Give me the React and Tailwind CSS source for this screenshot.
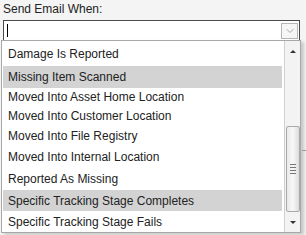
import { ChevronDown } from "lucide-react";

const options = [
  { label: "Damage Is Reported", h: "h-[24px]" },
  { label: "Missing Item Scanned", h: "h-[22px]", active: true },
  { label: "Moved Into Asset Home Location", h: "h-[19px]" },
  { label: "Moved Into Customer Location", h: "h-[19px]" },
  { label: "Moved Into File Registry", h: "h-[21px]" },
  { label: "Moved Into Internal Location", h: "h-[22px]" },
  { label: "Reported As Missing", h: "h-[22px]" },
  { label: "Specific Tracking Stage Completes", h: "h-[21px]", active: true },
  { label: "Specific Tracking Stage Fails", h: "h-[21px]" },
];

const App = () => {
  return (
    <div
      className="relative w-[306px] h-[235px] overflow-hidden bg-[#f4f4f4] text-[#222]"
      style={{ fontFamily: '"Liberation Sans", Arial, sans-serif' }}
    >
      <div className="pl-[3px] pt-[1px] h-[20px] text-[12px] leading-[16px]">Send Email When:</div>

      {/* input */}
      <div className="ml-[3px] w-[297px] h-[21px] border border-[#4a4a4a] bg-white flex items-center">
        <div className="ml-[3px] w-px h-[13px] bg-black" />
        <div className="ml-auto mr-[1px] w-[17px] h-[16px] border border-[#b5b5b5] bg-[#f6f6f6] flex items-center justify-center">
          <ChevronDown className="w-[12px] h-[12px] text-[#8a8a8a]" strokeWidth={1.5} />
        </div>
      </div>

      {/* dropdown list */}
      <div className="absolute left-[1px] top-[40px] w-[300px] h-[193px] border border-[#a8a8a8] bg-white flex shadow-[3px_2px_3px_rgba(0,0,0,0.18)]">
        <div className="flex-1 flex flex-col pl-[1px] pt-[1px]">
          {options.map((o) => (
            <div
              key={o.label}
              className={`${o.h} flex items-center pl-[5px] text-[12px] whitespace-nowrap ${o.active ? "bg-[#d3d3d3]" : ""}`}
            >
              {o.label}
            </div>
          ))}
        </div>
        <div className="w-[16px] ml-[2px] border-l border-[#d0d0d0] bg-[#f3f3f3] flex flex-col items-center">
          <div className="h-[18px] w-full flex items-center justify-center">
            <div className="w-0 h-0 border-l-[3px] border-r-[3px] border-b-[3px] border-l-transparent border-r-transparent border-b-[#333] mt-[2px]" />
          </div>
          <div className="h-[67px]" />
          <div className="w-[14px] h-[86px] border border-[#a9a9a9] rounded-[2px] bg-gradient-to-r from-[#e9e9e9] via-[#f8f8f8] to-[#dcdcdc] flex flex-col items-center justify-center gap-[2px]">
            <div className="w-[6px] h-px bg-[#777]" />
            <div className="w-[6px] h-px bg-[#777]" />
            <div className="w-[6px] h-px bg-[#777]" />
            <div className="w-[6px] h-px bg-[#777]" />
          </div>
          <div className="flex-1 w-full flex items-center justify-center">
            <div className="w-0 h-0 border-l-[3px] border-r-[3px] border-t-[3px] border-l-transparent border-r-transparent border-t-[#333]" />
          </div>
        </div>
      </div>

      {/* control edge behind list */}
      <div className="absolute left-[302px] top-[150px] w-[4px] h-px bg-[#9a9a9a]" />
    </div>
  );
};

export default App;
